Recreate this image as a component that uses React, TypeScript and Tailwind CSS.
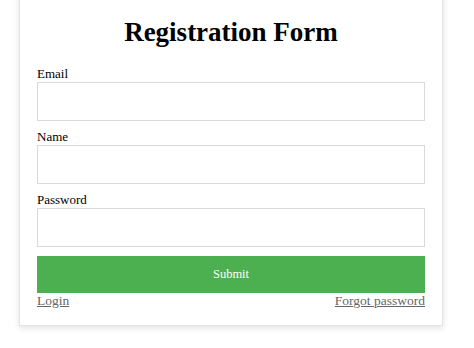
import React from "react";

const serif = { fontFamily: '"Liberation Serif", "Times New Roman", serif' };

function Field({ label, type, first }: { label: string; type: string; first?: boolean }) {
  return (
    <div className={first ? "mt-[17px]" : "mt-[8px]"}>
      <label className="block h-[15px] text-[13px] leading-[15px] text-black">{label}</label>
      <input
        type={type}
        className="mt-px block h-[39px] w-full border border-[#d9d9d9] bg-white outline-none"
      />
    </div>
  );
}

export default function App() {
  return (
    <div className="min-h-[348px] bg-white" style={serif}>
      <form className="-mt-[10px] ml-[19px] w-[424px] border border-[#e4e4e4] bg-white px-[17px] pt-[24px] pb-[17px] shadow-[0_2px_6px_rgba(0,0,0,0.12)]">
        <h1 className="h-[34px] text-center text-[27px] font-bold leading-[34px] text-black">
          Registration Form
        </h1>
        <Field label="Email" type="email" first />
        <Field label="Name" type="text" />
        <Field label="Password" type="password" />
        <button
          type="button"
          className="mt-[9px] block h-[37px] w-full bg-[#4caf50] text-[12.5px] text-white"
        >
          Submit
        </button>
        <div className="flex h-[15px] justify-between text-[13.5px] leading-[15px] text-[#666]">
          <a href="#" className="underline">Login</a>
          <a href="#" className="underline">Forgot password</a>
        </div>
      </form>
    </div>
  );
}
